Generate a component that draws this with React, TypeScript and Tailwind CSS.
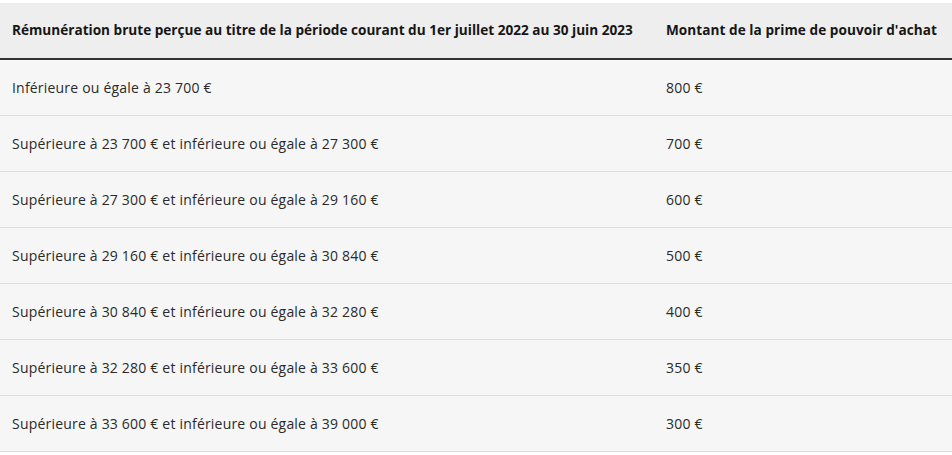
import React from "react";

const rows: [string, string][] = [
  ["Inférieure ou égale à 23 700 €", "800 €"],
  ["Supérieure à 23 700 € et inférieure ou égale à 27 300 €", "700 €"],
  ["Supérieure à 27 300 € et inférieure ou égale à 29 160 €", "600 €"],
  ["Supérieure à 29 160 € et inférieure ou égale à 30 840 €", "500 €"],
  ["Supérieure à 30 840 € et inférieure ou égale à 32 280 €", "400 €"],
  ["Supérieure à 32 280 € et inférieure ou égale à 33 600 €", "350 €"],
  ["Supérieure à 33 600 € et inférieure ou égale à 39 000 €", "300 €"],
];

export default function App() {
  return (
    <div
      className="w-[952px] h-[455px] bg-white pt-[3px] overflow-hidden"
      style={{ fontFamily: '"Open Sans", "Noto Sans", sans-serif' }}
    >
      <div className="grid grid-cols-[654px_1fr] h-[55px] bg-[#eeeeee] border-b-2 border-[#333333] box-content items-center text-[13.6px] font-bold text-[#161616]">
        <div className="pl-3 whitespace-nowrap">Rémunération brute perçue au titre de la période courant du 1er juillet 2022 au 30 juin 2023</div>
        <div className="pl-3 whitespace-nowrap tracking-[0.05px]">Montant de la prime de pouvoir d'achat</div>
      </div>
      {rows.map(([a, b]) => (
        <div
          key={a}
          className="grid grid-cols-[654px_1fr] h-[55px] bg-[#f6f6f6] border-b border-[#dddddd] box-content items-center text-[14px] tracking-[0.2px] text-[#2a2a2a]"
        >
          <div className="pl-3 whitespace-nowrap">{a}</div>
          <div className="pl-3 whitespace-nowrap">{b}</div>
        </div>
      ))}
    </div>
  );
}
